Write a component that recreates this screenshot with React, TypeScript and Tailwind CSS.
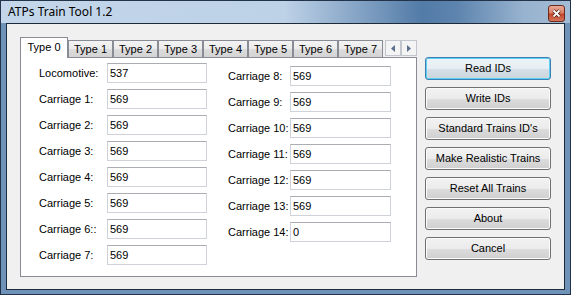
import React from 'react';

const leftRows = [
    { label: 'Locomotive:', value: '537' },
    { label: 'Carriage 1:', value: '569' },
    { label: 'Carriage 2:', value: '569' },
    { label: 'Carriage 3:', value: '569' },
    { label: 'Carriage 4:', value: '569' },
    { label: 'Carriage 5:', value: '569' },
    { label: 'Carriage 6::', value: '569' },
    { label: 'Carriage 7:', value: '569' },
];

const rightRows = [
    { label: 'Carriage 8:', value: '569' },
    { label: 'Carriage 9:', value: '569' },
    { label: 'Carriage 10:', value: '569' },
    { label: 'Carriage 11:', value: '569' },
    { label: 'Carriage 12:', value: '569' },
    { label: 'Carriage 13:', value: '569' },
    { label: 'Carriage 14:', value: '0' },
];

const buttons = ['Read IDs', 'Write IDs', "Standard Trains ID's", 'Make Realistic Trains', 'Reset All Trains', 'About', 'Cancel'];

const tabs = ['Type 1', 'Type 2', 'Type 3', 'Type 4', 'Type 5', 'Type 6', 'Type 7'];

function Field({ value, width }: { value: string; width: string }) {
    return (
        <div className={`${width} h-[20px] border border-[#cfd3d9] border-t-[#abadb3] bg-white flex items-center pl-[2px] text-black`}>
            {value}
        </div>
    );
}

function Arrow({ dir }: { dir: 'left' | 'right' }) {
    return (
        <div className="w-[16px] h-[16px] border border-[#c3c6cc] bg-[#f4f4f4] flex items-center justify-center">
            <svg width="4" height="7" viewBox="0 0 4 7">
                {dir === 'left' ? <path d="M4 0 L0 3.5 L4 7 Z" fill="#5d6f91" /> : <path d="M0 0 L4 3.5 L0 7 Z" fill="#5d6f91" />}
            </svg>
        </div>
    );
}

export default function App() {
    return (
        <div
            className="w-[571px] h-[295px] border border-[#23344a] bg-[#6f92b8] flex flex-col text-[11px] text-black"
            style={{ fontFamily: '"Liberation Sans", Arial, sans-serif' }}
        >
            {/* title bar */}
            <div className="h-[22px] flex items-center pl-[7px] pr-[5px] bg-[linear-gradient(to_right,#c3d6ea_0%,#bdd1e7_50%,#7f9fc2_64%,#527ba7_74%,#5d84ae_80%,#98b3cf_92%,#a3bcd5_100%)]">
                <span className="text-[12px] text-black" style={{ fontFamily: '"Noto Sans", "Open Sans", sans-serif' }}>
                    ATPs Train Tool 1.2
                </span>
                <div className="ml-auto mt-[3px] w-[17px] h-[17px] rounded-[3px] border border-[#6b2a1c] bg-[linear-gradient(#e9a996_0%,#d9826a_45%,#c4452a_55%,#d5765d_100%)] flex items-center justify-center">
                    <svg width="9" height="9" viewBox="0 0 9 9">
                        <path d="M1.5 1.5 L7.5 7.5 M7.5 1.5 L1.5 7.5" stroke="#4a1a10" strokeWidth="3.2" />
                        <path d="M1.5 1.5 L7.5 7.5 M7.5 1.5 L1.5 7.5" stroke="#ffffff" strokeWidth="1.8" />
                    </svg>
                </div>
            </div>

            {/* client area */}
            <div className="flex-1 mx-[5px] mb-[4px] border border-[#1d2a3a] bg-[#f0f0f0] flex pl-[13px] pt-[13px]">
                <div className="w-[397px] flex flex-col">
                    <div className="relative z-10 flex items-end h-[20px]">
                        <div className="w-[48px] h-[21px] -mb-px border border-b-0 border-[#898c95] bg-white flex items-center justify-center pb-[2px]">
                            Type 0
                        </div>
                        {tabs.map((t) => (
                            <div
                                key={t}
                                className="w-[45px] h-[17px] border border-b-0 border-[#898c95] bg-[linear-gradient(#f3f3f3_0%,#ebebeb_50%,#dddddd_51%,#d3d3d3_100%)] flex items-center justify-center pt-px"
                            >
                                {t}
                            </div>
                        ))}
                        <div className="ml-auto self-start mt-[3px] flex">
                            <Arrow dir="left" />
                            <Arrow dir="right" />
                        </div>
                    </div>

                    <div className="h-[220px] border border-[#898c95] bg-white flex pl-[18px] pt-[5px]">
                        <div className="flex flex-col gap-[6px]">
                            {leftRows.map((r) => (
                                <div key={r.label} className="flex items-center">
                                    <span className="w-[68px]">{r.label}</span>
                                    <Field value={r.value} width="w-[100px]" />
                                </div>
                            ))}
                        </div>
                        <div className="flex flex-col gap-[6px] ml-[21px] mt-[3px]">
                            {rightRows.map((r) => (
                                <div key={r.label} className="flex items-center">
                                    <span className="w-[62px]">{r.label}</span>
                                    <Field value={r.value} width="w-[101px]" />
                                </div>
                            ))}
                        </div>
                    </div>
                </div>

                <div className="ml-[8px] mt-[20px] flex flex-col gap-[7px]">
                    {buttons.map((b, i) => (
                        <div
                            key={b}
                            className={
                                i === 0
                                    ? 'w-[126px] h-[23px] rounded-[3px] border border-[#3c7fb1] bg-[linear-gradient(#eef4f8_0%,#e6eef3_50%,#d6e0e6_51%,#cad5dc_100%)] shadow-[inset_0_0_0_1px_#5cd0f7] flex items-center justify-center'
                                    : 'w-[126px] h-[23px] rounded-[3px] border border-[#707070] bg-[linear-gradient(#f2f2f2_0%,#ebebeb_50%,#dddddd_51%,#cfcfcf_100%)] shadow-[inset_0_0_0_1px_#fbfbfb] flex items-center justify-center'
                            }
                        >
                            {b}
                        </div>
                    ))}
                </div>
            </div>
        </div>
    );
}
